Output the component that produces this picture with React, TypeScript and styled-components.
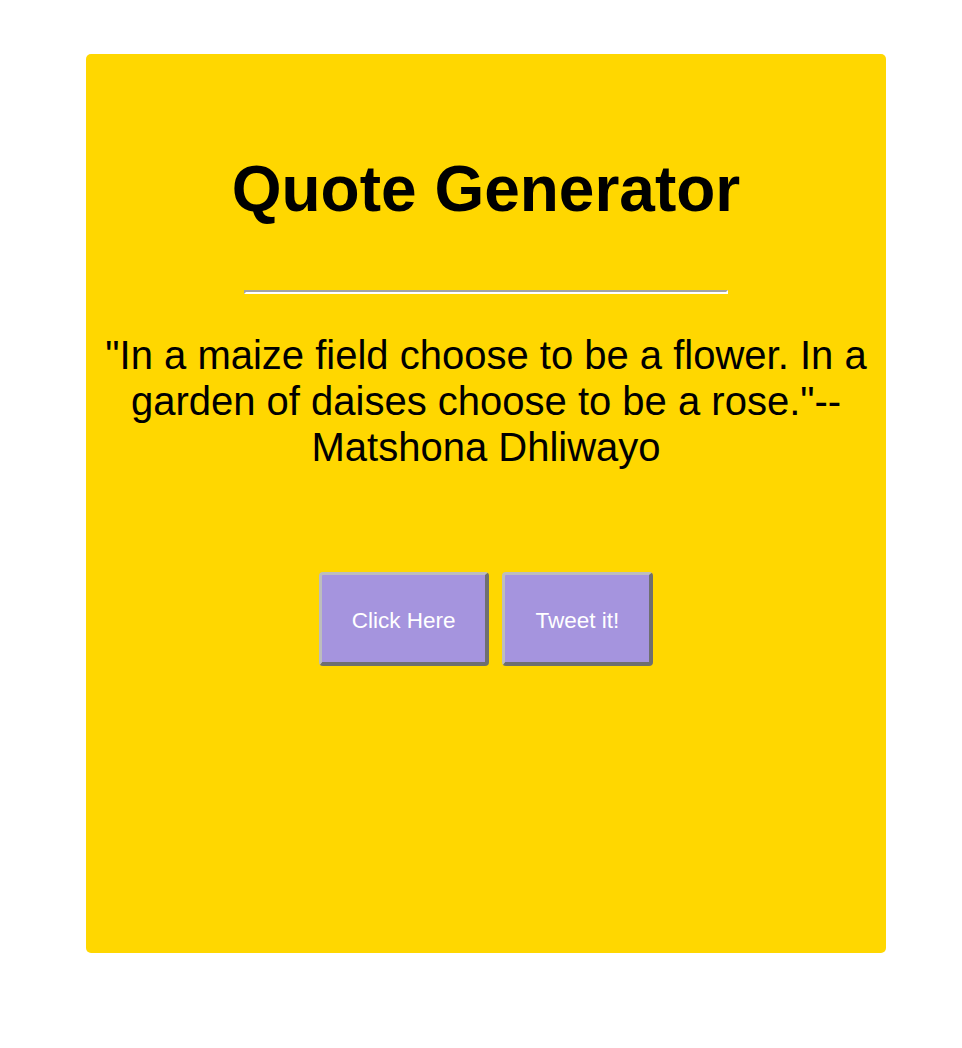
import React from "react";
import styled, { createGlobalStyle } from "styled-components";

const Global = createGlobalStyle`
  html, body { margin: 0; padding: 0; background: #ffffff; }
  body { font-family: "Liberation Sans", Arial, Helvetica, sans-serif; }
`;

const Page = styled.div`
  padding: 54px 0 95px 86px;
`;

const Card = styled.main`
  width: 800px;
  height: 899px;
  box-sizing: border-box;
  background: #ffd700;
  border-radius: 5px;
  padding: 98px 15px 0;
  display: flex;
  flex-direction: column;
  align-items: center;
`;

const Title = styled.h1`
  margin: 0;
  font-size: 64px;
  line-height: 74px;
  font-weight: 700;
  color: #000;
  text-align: center;
`;

const Rule = styled.hr`
  width: 480px;
  height: 0;
  margin: 64px 0 0;
  border: none;
  border-top: 2px solid #a3a3a3;
  border-bottom: 2px solid #ffffff;
  border-left: 2px solid #a3a3a3;
  border-right: 2px solid #ffffff;
`;

const Quote = styled.p`
  margin: 38px 0 0;
  font-size: 40px;
  line-height: 46px;
  color: #000;
  text-align: center;
`;

const Actions = styled.div`
  display: flex;
  gap: 13px;
  margin-top: 102px;
`;

const Button = styled.button`
  font-family: "Liberation Sans", Arial, Helvetica, sans-serif;
  font-size: 22.5px;
  line-height: 25px;
  color: #ffffff;
  background: #a594de;
  padding: 33px 30px 29px;
  border-style: solid;
  border-width: 3px 4px 4px 3px;
  border-color: #bdbdbd #6f6f6f #6f6f6f #bdbdbd;
  border-radius: 4px;
  cursor: pointer;
`;

export default function App() {
  return (
    <Page>
      <Global />
      <Card>
        <Title>Quote Generator</Title>
        <Rule />
        <Quote>
          "In a maize field choose to be a flower. In a garden of daises choose to be a rose."--Matshona Dhliwayo
        </Quote>
        <Actions>
          <Button>Click Here</Button>
          <Button>Tweet it!</Button>
        </Actions>
      </Card>
    </Page>
  );
}
